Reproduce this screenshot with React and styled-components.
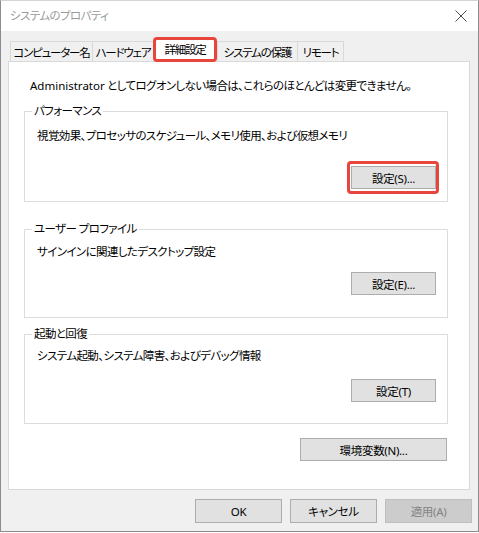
import React from 'react'
import styled, { createGlobalStyle } from 'styled-components'

const GlobalStyle = createGlobalStyle`
  html, body {
    margin: 0;
    padding: 0;
    background: #ffffff;
  }
  body {
    font-family: "Noto Sans", "Noto Sans CJK JP", sans-serif;
    font-size: 11.5px;
    color: #000;
    font-feature-settings: "palt";
    letter-spacing: -0.6px;
  }
`;

const tabs = [
  { label: 'コンピューター名', width: 82 },
  { label: 'ハードウェア', width: 61 },
  { label: '詳細設定', width: 64, active: true },
  { label: 'システムの保護', width: 80 },
  { label: 'リモート', width: 47, last: true },
];

const groups = [
  {
    legend: 'パフォーマンス',
    text: '視覚効果、プロセッサのスケジュール、メモリ使用、および仮想メモリ',
    button: '設定(S)...',
    top: 9, textGap: 9, buttonGap: 22, bottom: 12, highlight: true,
  },
  {
    legend: 'ユーザー プロファイル',
    text: 'サインインに関連したデスクトップ設定',
    button: '設定(E)...',
    top: 19, textGap: 7, buttonGap: 12, bottom: 22,
  },
  {
    legend: '起動と回復',
    text: 'システム起動、システム障害、およびデバッグ情報',
    button: '設定(T)',
    top: 8, textGap: 6, buttonGap: 15, bottom: 21,
  },
];

function App() {
  return (
    <>
      <GlobalStyle />
      <Window>
        <TitleBar>
          <Title>システムのプロパティ</Title>
          <Close>
            <svg width="12" height="12" viewBox="0 0 12 12">
              <path d="M0.5 0.5 L11.5 11.5 M11.5 0.5 L0.5 11.5" stroke="#4a4a4a" strokeWidth="1" fill="none" />
            </svg>
          </Close>
        </TitleBar>

        <Body>
          <TabStrip>
            {tabs.map(t => (
              <Tab key={t.label} $width={t.width} $active={t.active} $last={t.last}>
                {t.label}
              </Tab>
            ))}
          </TabStrip>

          <Panel>
            <Notice><Latin>Administrator</Latin> としてログオンしない場合は、これらのほとんどは変更できません。</Notice>

            {groups.map(g => (
              <Group key={g.legend} $top={g.top}>
                <Legend>{g.legend}</Legend>
                <GroupText $gap={g.textGap}>{g.text}</GroupText>
                <ButtonRow $gap={g.buttonGap} $bottom={g.bottom}>
                  <Button $width={85} $highlight={g.highlight}>{g.button}</Button>
                </ButtonRow>
              </Group>
            ))}

            <EnvRow>
              <Button $width={147}>環境変数(N)...</Button>
            </EnvRow>
          </Panel>

          <Footer>
            <Button $width={87} $height={24}>OK</Button>
            <Button $width={87} $height={24}>キャンセル</Button>
            <Button $width={87} $height={24} disabled>適用(A)</Button>
          </Footer>
        </Body>
      </Window>
    </>
  )
}

export default App

const Window = styled.div`
  width: 479px;
  height: 532px;
  box-sizing: border-box;
  border: 1px solid #8c8c8c;
  border-top-color: #d4d4d4;
  background: #f0f0f0;
  display: flex;
  flex-direction: column;
  overflow: hidden;
`;

const TitleBar = styled.div`
  height: 30px;
  flex: none;
  background: #ffffff;
  display: flex;
  align-items: center;
  justify-content: space-between;
`;

const Title = styled.div`
  padding-left: 9px;
  color: #9a9a9a;
  line-height: 16px;
`;

const Close = styled.div`
  width: 35px;
  height: 30px;
  display: flex;
  align-items: center;
  justify-content: center;
`;

const Body = styled.div`
  flex: 1;
  display: flex;
  flex-direction: column;
  padding: 6px 6px 0 7px;
`;

const TabStrip = styled.div`
  display: flex;
  align-items: flex-end;
  padding-left: 2px;
  margin-bottom: -1px;
`;

const Tab = styled.div`
  box-sizing: border-box;
  width: ${p => p.$width}px;
  height: ${p => (p.$active ? 25 : 21)}px;
  padding-top: ${p => (p.$active ? 0 : 1)}px;
  display: flex;
  align-items: center;
  justify-content: center;
  white-space: nowrap;
  line-height: 16px;
  letter-spacing: -1.2px;
  background: ${p => (p.$active ? '#ffffff' : '#f0f0f0')};
  border: 1px solid #d9d9d9;
  border-bottom: none;
  border-right: ${p => (p.$last ? '1px solid #d9d9d9' : 'none')};

  ${p => p.$active && `
    position: relative;
    z-index: 1;
    border: 3px solid #e8453c;
    border-radius: 4px;
  `}
`;

const Panel = styled.div`
  background: #ffffff;
  border: 1px solid #d9d9d9;
  height: 429px;
  box-sizing: border-box;
  margin-right: 2px;
  padding: 16px 21px 0 15px;
  display: flex;
  flex-direction: column;
`;

const Notice = styled.div`
  padding-left: 6px;
  line-height: 16px;
  white-space: nowrap;
`;

const Latin = styled.span`
  letter-spacing: 0;
`;

const Group = styled.fieldset`
  margin: ${p => p.$top}px 0 0 0;
  padding: 0 11px 0 12px;
  min-inline-size: 0;
  border: 1px solid #dcdcdc;
  display: flex;
  flex-direction: column;
`;

const Legend = styled.legend`
  margin-left: -5px;
  padding: 0 2px;
  line-height: 16px;
`;

const GroupText = styled.div`
  margin-top: ${p => p.$gap}px;
  line-height: 16px;
  white-space: nowrap;
`;

const ButtonRow = styled.div`
  display: flex;
  justify-content: flex-end;
  margin-top: ${p => p.$gap}px;
  margin-bottom: ${p => p.$bottom}px;
`;

const EnvRow = styled.div`
  display: flex;
  justify-content: flex-end;
  margin-top: 14px;
  padding-right: 1px;
`;

const Button = styled.button`
  position: relative;
  box-sizing: border-box;
  width: ${p => p.$width}px;
  height: ${p => p.$height || 23}px;
  padding: 0;
  font-family: inherit;
  font-size: 11.5px;
  font-feature-settings: "palt";
  letter-spacing: -0.3px;
  color: #000;
  background: #e1e1e1;
  border: 1px solid #adadad;
  border-radius: 0;

  &:disabled {
    color: #838383;
    background: #cccccc;
    border-color: #bfbfbf;
  }

  ${p => p.$highlight && `
    &::after {
      content: "";
      position: absolute;
      top: -6px;
      left: -5px;
      right: -4px;
      bottom: -6px;
      border: 3px solid #e8453c;
      border-radius: 4px;
    }
  `}
`;

const Footer = styled.div`
  display: flex;
  justify-content: flex-end;
  gap: 8px;
  padding: 9px 0 0 0;
`;
